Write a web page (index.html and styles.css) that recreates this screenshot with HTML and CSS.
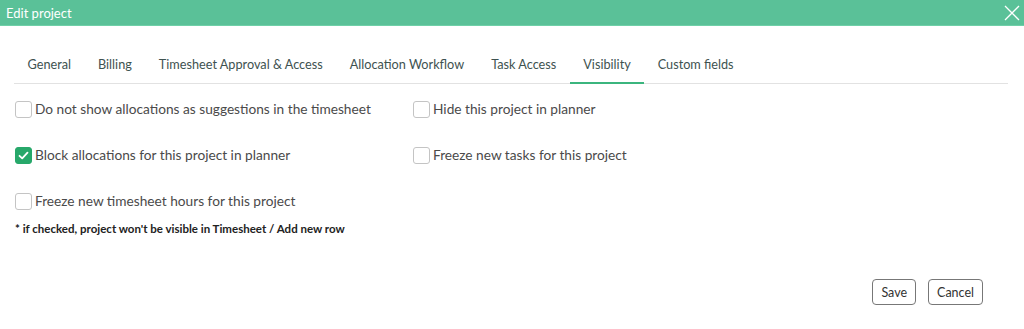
FILE: index.html
```html
<!DOCTYPE html>
<html>
<head>
<meta charset="utf-8">
<link rel="stylesheet" href="styles.css">
</head>
<body>
<div class="dialog">
  <header class="titlebar">
    <span class="title">Edit project</span>
    <svg class="close" width="16" height="16" viewBox="0 0 16 16"><path d="M1 1L15 15M15 1L1 15" stroke="#fff" stroke-width="1.3" fill="none"/></svg>
  </header>
  <nav class="tabs">
    <span class="tab">General</span>
    <span class="tab">Billing</span>
    <span class="tab">Timesheet Approval &amp; Access</span>
    <span class="tab">Allocation Workflow</span>
    <span class="tab">Task Access</span>
    <span class="tab active">Visibility</span>
    <span class="tab">Custom fields</span>
  </nav>
  <div class="options">
    <label class="opt"><span class="box"></span>Do not show allocations as suggestions in the timesheet</label>
    <label class="opt"><span class="box"></span>Hide this project in planner</label>
    <label class="opt"><span class="box checked"><svg width="13" height="13" viewBox="0 0 13 13"><path d="M2.5 6.8L5.2 9.4L10.5 3.6" stroke="#fff" stroke-width="1.8" fill="none" stroke-linecap="round" stroke-linejoin="round"/></svg></span>Block allocations for this project in planner</label>
    <label class="opt"><span class="box"></span>Freeze new tasks for this project</label>
    <label class="opt"><span class="box"></span>Freeze new timesheet hours for this project</label>
  </div>
  <p class="note">* if checked, project won't be visible in Timesheet / Add new row</p>
  <div class="actions">
    <button class="btn">Save</button>
    <button class="btn">Cancel</button>
  </div>
</div>
</body>
</html>
```
FILE: styles.css
```css
html, body {
  margin: 0;
  padding: 0;
  background: #fff;
  font-family: Lato, "Open Sans", sans-serif;
}
.dialog {
  width: 1024px;
  height: 329px;
  display: flex;
  flex-direction: column;
}
.titlebar {
  height: 26px;
  background: #5ac198;
  display: flex;
  align-items: center;
  justify-content: space-between;
  padding: 0 4px 0 6px;
  border-bottom: 1px solid #6fd0a8;
  box-sizing: border-box;
}
.title {
  color: #fff;
  font-size: 13px;
}
.close {
  display: block;
}
.tabs {
  margin: 20px 16px 0 14px;
  display: flex;
  border-bottom: 1px solid #e2e2e2;
}
.tab {
  padding: 9px 13.5px;
  font-size: 12.7px;
  line-height: 18px;
  color: #3e5250;
  margin-bottom: -1px;
  border-bottom: 2px solid transparent;
}
.tab.active {
  border-bottom-color: #3bb57e;
}
.options {
  display: grid;
  grid-template-columns: 398px auto;
  row-gap: 28px;
  margin: 16px 0 0 15px;
}
.opt {
  display: flex;
  align-items: center;
  gap: 3px;
  font-size: 13.7px;
  line-height: 18px;
  color: #4a4a4a;
}
.box {
  width: 15px;
  height: 15px;
  border: 1px solid #c4c4c4;
  border-radius: 3px;
  display: flex;
  align-items: center;
  justify-content: center;
}
.box.checked {
  background: #27a86a;
  border-color: #27a86a;
}
.note {
  margin: 12px 0 0 15px;
  font-size: 11.5px;
  font-weight: bold;
  color: #222;
}
.actions {
  margin: 44px 41px 0 0;
  display: flex;
  justify-content: flex-end;
  gap: 12px;
}
.btn {
  height: 26px;
  padding: 0 8px;
  font-family: Lato, "Open Sans", sans-serif;
  font-size: 12.5px;
  color: #333;
  background: #fff;
  border: 1px solid #777;
  border-radius: 4px;
}
```
